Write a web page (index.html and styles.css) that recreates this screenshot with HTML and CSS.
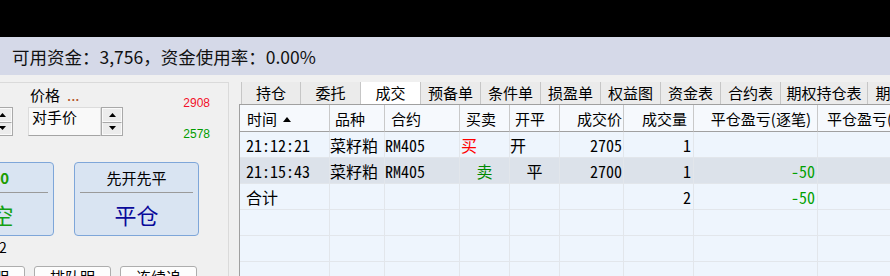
FILE: index.html
```html
<!DOCTYPE html>
<html lang="zh">
<head>
<meta charset="utf-8">
<title>成交</title>
<link rel="stylesheet" href="styles.css">
</head>
<body>
<div class="topband"></div>
<div class="fundbar">可用资金：<span class="num">3,756</span>，资金使用率：<span class="num">0.00%</span></div>
<div class="main">
  <section class="order-panel">
    <div class="row-a">
      <div class="spin spin-cut">
        <span class="spin-btn"><svg width="7" height="4" viewBox="0 0 7 4"><path d="M3.5 0L7 4H0Z"/></svg></span>
        <span class="spin-btn"><svg width="7" height="4" viewBox="0 0 7 4"><path d="M0 0H7L3.5 4Z"/></svg></span>
      </div>
      <div class="price-block">
        <div class="price-label">价格<span class="dots">...</span></div>
        <div class="combo">
          <div class="combo-input">对手价</div>
          <div class="spin">
            <span class="spin-btn"><svg width="7" height="4" viewBox="0 0 7 4"><path d="M3.5 0L7 4H0Z"/></svg></span>
            <span class="spin-btn"><svg width="7" height="4" viewBox="0 0 7 4"><path d="M0 0H7L3.5 4Z"/></svg></span>
          </div>
        </div>
      </div>
      <div class="limits">
        <span class="up">2908</span>
        <span class="down">2578</span>
      </div>
    </div>
    <div class="row-b">
      <div class="trade-btn sell">
        <div class="btn-top">2700</div>
        <div class="btn-main">卖空</div>
      </div>
      <div class="trade-btn close">
        <div class="btn-top">先开先平</div>
        <div class="btn-main">平仓</div>
      </div>
    </div>
    <div class="row-c">2</div>
    <div class="row-d">
      <div class="small-btn">追价明</div>
      <div class="small-btn">排队明</div>
      <div class="small-btn">连续追</div>
    </div>
  </section>
  <section class="records">
    <div class="tabs">
      <div class="tab">持仓</div>
      <div class="tab">委托</div>
      <div class="tab active">成交</div>
      <div class="tab">预备单</div>
      <div class="tab">条件单</div>
      <div class="tab">损盈单</div>
      <div class="tab">权益图</div>
      <div class="tab">资金表</div>
      <div class="tab">合约表</div>
      <div class="tab wide">期权持仓表</div>
      <div class="tab last">期权行情</div>
    </div>
    <div class="grid">
      <div class="tr head">
        <div class="th pl7">时间<svg class="sort" width="8" height="5" viewBox="0 0 8 5"><path d="M4 0L8 5H0Z"/></svg></div>
        <div class="th pl5">品种</div>
        <div class="th pl6">合约</div>
        <div class="th pl6">买卖</div>
        <div class="th pl5">开平</div>
        <div class="th right pr1">成交价</div>
        <div class="th right pr6">成交量</div>
        <div class="th right pr6">平仓盈亏(逐笔)</div>
        <div class="th pl9">平仓盈亏(逐日)</div>
      </div>
      <div class="tr">
        <div class="td pl6">21:12:21</div>
        <div class="td">菜籽粕</div>
        <div class="td">RM405</div>
        <div class="td pl1 buy">买</div>
        <div class="td">开</div>
        <div class="td right pr1">2705</div>
        <div class="td right pr2">1</div>
        <div class="td right pr2"></div>
        <div class="td"></div>
      </div>
      <div class="tr alt">
        <div class="td pl6">21:15:43</div>
        <div class="td">菜籽粕</div>
        <div class="td">RM405</div>
        <div class="td center sell-c">卖</div>
        <div class="td center">平</div>
        <div class="td right pr1">2700</div>
        <div class="td right pr2">1</div>
        <div class="td right pr2 loss">-50</div>
        <div class="td"></div>
      </div>
      <div class="tr">
        <div class="td pl6">合计</div>
        <div class="td"></div>
        <div class="td"></div>
        <div class="td"></div>
        <div class="td"></div>
        <div class="td"></div>
        <div class="td right pr2">2</div>
        <div class="td right pr2 loss">-50</div>
        <div class="td"></div>
      </div>
      <div class="tr">
        <div class="td"></div><div class="td"></div><div class="td"></div><div class="td"></div><div class="td"></div><div class="td"></div><div class="td"></div><div class="td"></div><div class="td"></div>
      </div>
      <div class="tr">
        <div class="td"></div><div class="td"></div><div class="td"></div><div class="td"></div><div class="td"></div><div class="td"></div><div class="td"></div><div class="td"></div><div class="td"></div>
      </div>
      <div class="tr">
        <div class="td"></div><div class="td"></div><div class="td"></div><div class="td"></div><div class="td"></div><div class="td"></div><div class="td"></div><div class="td"></div><div class="td"></div>
      </div>
    </div>
  </section>
</div>
</body>
</html>
```

FILE: styles.css
```css
* { box-sizing: border-box; }
html, body { margin: 0; padding: 0; }
body {
  width: 890px;
  height: 276px;
  overflow: hidden;
  background: #f0f0f0;
  color: #000;
  font-family: "Noto Sans CJK SC", "Noto Sans", sans-serif;
}

.topband { height: 37px; background: #000; }

.fundbar {
  height: 38px;
  background: #d5d9e8;
  padding-left: 12px;
  display: flex;
  align-items: center;
  font-size: 17.5px;
  color: #111;
  white-space: nowrap;
}

.main { display: flex; gap: 10px; height: 201px; }

/* left order panel */
.order-panel {
  width: 229px;
  flex: none;
  margin-top: 7px;
  border-top: 1px solid #dadada;
  border-right: 1px solid #dadada;
  overflow: hidden;
  font-size: 15px;
}

.row-a { display: flex; align-items: flex-start; height: 53px; }

.spin {
  width: 22px;
  height: 29px;
  flex: none;
  border: 1px solid #a9a9a9;
  background: #f0f0f0;
  display: flex;
  flex-direction: column;
}
.spin-btn {
  flex: 1;
  display: flex;
  align-items: center;
  justify-content: center;
  border: 1px solid #fafafa;
  background: #ececec;
}
.spin-btn + .spin-btn { border-top: 1px solid #a9a9a9; }
.spin-btn svg { fill: #000; display: block; }
.spin-cut { margin-left: -9px; margin-top: 24px; }

.price-block { margin-left: 15px; display: flex; flex-direction: column; }
.price-label { height: 24px; line-height: 24px; padding-left: 2px; white-space: nowrap; }
.dots { color: #b4501e; margin-left: 7px; }

.combo { display: flex; }
.combo-input {
  width: 73px;
  height: 29px;
  background: #f9f9f9;
  border: 1px solid #dcdcdc;
  border-bottom-color: #a5a5a5;
  padding-left: 3px;
  line-height: 18px;
  font-size: 15px;
}

.limits {
  margin-left: auto;
  margin-right: 18px;
  margin-top: 13px;
  display: flex;
  flex-direction: column;
  gap: 17px;
  font-family: "Liberation Sans", Arial, sans-serif;
  font-size: 12px;
  line-height: 14px;
}
.up { color: #f2102a; }
.down { color: #009c00; }

.row-b { display: flex; gap: 20px; margin-top: 26px; margin-left: -71px; }
.trade-btn {
  width: 125px;
  height: 74px;
  flex: none;
  border: 1px solid #7ea6d9;
  border-radius: 4px;
  background: #d9e4f2;
  padding: 0 5px;
  display: flex;
  flex-direction: column;
}
.btn-top {
  height: 30px;
  border-bottom: 1px solid #9a9a9a;
  display: flex;
  align-items: center;
  justify-content: center;
  font-size: 15px;
  white-space: nowrap;
}
.btn-main {
  flex: 1;
  display: flex;
  align-items: center;
  justify-content: center;
  font-size: 22px;
  white-space: nowrap;
}
.sell .btn-top { color: #1a9c00; font-weight: 700; }
.sell .btn-main { color: #14a014; }
.close .btn-main { color: #0a0a9a; }

.row-c { margin-top: 3px; height: 16px; line-height: 16px; font-size: 14px; margin-left: -1px; }

.row-d { display: flex; gap: 9px; margin-left: -52px; margin-top: 11px; }
.small-btn {
  width: 77px;
  height: 26px;
  flex: none;
  border: 1px solid #adadad;
  border-radius: 3px;
  background: #fdfdfd;
  text-align: center;
  font-size: 15px;
  line-height: 20px;
}

/* records */
.records { flex: 1; min-width: 0; padding-top: 7px; display: flex; flex-direction: column; }
.tabs { display: flex; margin-left: 2px; height: 22px; }
.tab {
  flex: none;
  width: 60px;
  height: 22px;
  background: #ebebeb;
  border-right: 1px solid #c6c6c6;
  text-align: center;
  font-size: 15px;
  line-height: 22px;
  white-space: nowrap;
  overflow: hidden;
}
.tab:first-child { border-left: 1px solid #c6c6c6; }
.tab.active { background: #fff; }
.tab.wide { width: 87px; }
.tab.last { width: 76px; }

.grid {
  display: grid;
  grid-template-columns: 90px 55px 75px 50px 50px 64px 70px 124px 200px;
  grid-template-rows: 27px;
  grid-auto-rows: 26px;
  border-left: 1px solid #a0a0a0;
  border-top: 1px solid #a0a0a0;
  width: max-content;
}
.tr { display: contents; }

.th {
  background: #f6f9fd;
  border-right: 1px solid #c9c9c9;
  border-bottom: 1px solid #a0a0a0;
  display: flex;
  align-items: center;
  font-size: 15px;
  white-space: nowrap;
}
.sort { fill: #000; margin-left: 6px; margin-top: 2px; }

.td {
  background: #eef5fd;
  border-right: 1px solid #e2e6eb;
  border-bottom: 1px solid #e2e6eb;
  display: flex;
  align-items: center;
  font-family: "Noto Sans CJK SC", sans-serif;
  font-feature-settings: "hwid" 1;
  font-size: 16px;
  white-space: nowrap;
}
.alt .td { background: #dce2ea; }

.right { justify-content: flex-end; }
.center { justify-content: center; }
.pl1 { padding-left: 1px; }
.pl5 { padding-left: 5px; }
.pl6 { padding-left: 6px; }
.pl7 { padding-left: 7px; }
.pl9 { padding-left: 9px; }
.pr1 { padding-right: 1px; }
.pr2 { padding-right: 2px; }
.pr6 { padding-right: 6px; }

.buy { color: #f00; }
.sell-c { color: #008a00; }
.loss { color: #00a000; }
```
